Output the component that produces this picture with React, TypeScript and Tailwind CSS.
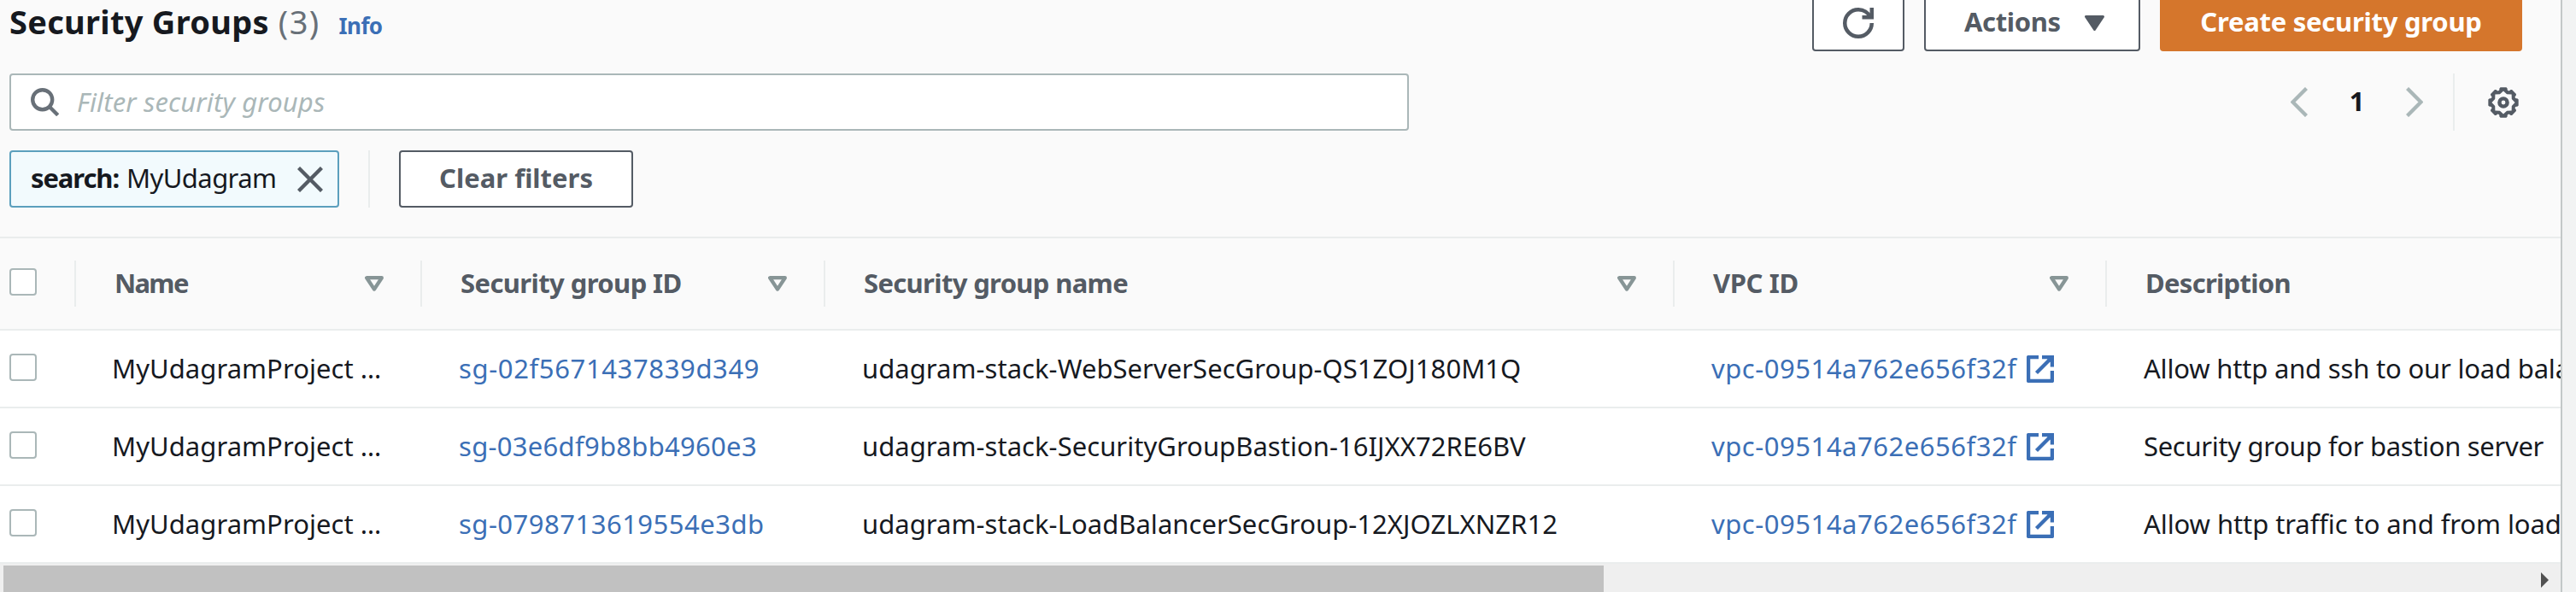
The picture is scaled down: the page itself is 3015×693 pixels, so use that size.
import React, { ReactNode } from "react";

const polar = (r: number, deg: number) => {
  const a = (deg * Math.PI) / 180;
  return `${(18 + r * Math.sin(a)).toFixed(2)} ${(18 - r * Math.cos(a)).toFixed(2)}`;
};
const steps = [0, 45, 90, 135, 180, 225, 270, 315];
const gearOuter = "M" + steps.flatMap((d) => [polar(17.3, d - 15), polar(18, d - 11), polar(18, d + 11), polar(17.3, d + 15), polar(15, d + 19), polar(15, d + 26)]).join("L") + "Z";
const gearInner = "M" + steps.flatMap((d) => [polar(13.6, d), polar(10.6, d + 22.5)]).join("L") + "Z";

function GearIcon() {
  return (
    <svg className="size-9" viewBox="0 0 36 36">
      <path d={gearOuter + gearInner} fill="#545b64" fillRule="evenodd" />
      <circle cx="18" cy="18" r="4.6" fill="none" stroke="#545b64" strokeWidth="4.4" />
    </svg>
  );
}

function SearchIcon() {
  return (
    <svg className="size-[33px]" viewBox="0 0 33 33" fill="none" stroke="#687078" strokeWidth="4.4">
      <circle cx="13.7" cy="13.7" r="11.5" />
      <path d="M21.7 21.7l10 10" />
    </svg>
  );
}

function CloseIcon() {
  return (
    <svg className="size-[30px]" viewBox="0 0 30 30" fill="none" stroke="#545b64" strokeWidth="4.4">
      <path d="M1.5 1.5l27 27M28.5 1.5l-27 27" />
    </svg>
  );
}

function RefreshIcon() {
  return (
    <svg className="size-9" viewBox="0 0 16 16" fill="none" stroke="#545b64" strokeWidth="2">
      <path d="M10 5h5V0" />
      <path d="M15 8a6.957 6.957 0 0 1-7 7 6.957 6.957 0 0 1-7-7 6.957 6.957 0 0 1 7-7 6.87 6.87 0 0 1 6.3 4" />
    </svg>
  );
}

function ExternalIcon() {
  return (
    <svg className="size-8 shrink-0" viewBox="0 0 32 32" fill="none" stroke="#3b6fb6" strokeWidth="4.3">
      <path d="M14 2.100H2.100v27.800h27.800V18" strokeLinejoin="round" />
      <path d="M18 2.100h11.900v11.400M29 3L11.500 20.500" />
      <path d="M23 3h6v6z" fill="#3b6fb6" stroke="none" />
    </svg>
  );
}

function SortIcon() {
  return (
    <svg className="h-[18px] w-[22px]" viewBox="0 0 22 18" fill="none" stroke="#879596" strokeWidth="4.3" strokeLinejoin="round">
      <path d="M2.200 2.200h17.600l-8.800 13.400z" />
    </svg>
  );
}

function Chevron({ flip = false }: { flip?: boolean }) {
  return (
    <svg className={flip ? "h-[35px] w-5 -scale-x-100" : "h-[35px] w-5"} viewBox="0 0 20 35" fill="none" stroke="#aab7b8" strokeWidth="4.4">
      <path d="M18.500 1.500l-16 16 16 16" />
    </svg>
  );
}

function Checkbox({ className = "" }: { className?: string }) {
  return <span className={`ml-[11px] block size-8 rounded-[4px] border-2 border-[#aab7b8] bg-white ${className}`} />;
}

function HeadCell({ children, sort = true }: { children: ReactNode; sort?: boolean }) {
  return (
    <div className="flex h-[106px] items-center">
      <div className={`flex h-[54px] flex-1 items-center justify-between pr-[43px] pl-[45px] font-bold whitespace-nowrap text-[#545b64] ${sort ? "border-r-2 border-[#eaeded]" : ""}`}>
        <span className="pb-0.5">{children}</span>
        {sort && <SortIcon />}
      </div>
    </div>
  );
}

const rows = [
  { id: "sg-02f5671437839d349", idTrack: "tracking-[0.63px]", name: "udagram-stack-WebServerSecGroup-QS1ZOJ180M1Q", desc: "Allow http and ssh to our load balancer", descTrack: "tracking-[-0.19px]" },
  { id: "sg-03e6df9b8bb4960e3", idTrack: "tracking-[0.29px]", name: "udagram-stack-SecurityGroupBastion-16IJXX72RE6BV", desc: "Security group for bastion server", descTrack: "tracking-[-0.32px]" },
  { id: "sg-0798713619554e3db", idTrack: "tracking-[0.49px]", name: "udagram-stack-LoadBalancerSecGroup-12XJOZLXNZR12", desc: "Allow http traffic to and from load balancer", descTrack: "tracking-[-0.08px]" },
];

const grid = "grid grid-cols-[89px_405px_472px_994px_506px_minmax(0,1fr)]";

export default function App() {
  return (
    <div className="flex h-[693px] w-[3015px] overflow-hidden bg-[#f2f3f3] font-['Noto_Sans',sans-serif] text-[31px] leading-[42px] text-[#16191f]">
      <main className="flex w-[2999px] flex-col overflow-hidden border-r-2 border-[#c3c8c8] bg-[#fafafa]">
        <header className="-mt-[7px] flex h-[67px] shrink-0 justify-between pr-[45px] pl-[11px]">
          <div className="flex items-baseline leading-[64px]">
            <h1 className="text-[38px] font-bold tracking-[0.28px]">Security Groups</h1>
            <span className="ml-[11px] text-[38px] tracking-[1.4px] text-[#687078]">(3)</span>
            <a className="ml-[22px] text-[26px] font-bold tracking-[-0.6px] text-[#3b6fb6]">Info</a>
          </div>
          <div className="flex gap-[23px] font-bold text-[#545b64]">
            <button className="flex w-[108px] items-center justify-center rounded-[4px] border-2 border-[#545b64] bg-white"><RefreshIcon /></button>
            <button className="flex w-[253px] items-center rounded-[4px] border-2 border-[#545b64] bg-white pl-[45px]">
              <span className="pb-[3px] tracking-[-0.37px]">Actions</span>
              <svg className="ml-[28px] h-[18px] w-[23px]" viewBox="0 0 23 18" fill="#545b64" stroke="#545b64" strokeWidth="3" strokeLinejoin="round">
                <path d="M1.500 1.500h20l-10 15z" />
              </svg>
            </button>
            <button className="w-[424px] rounded-[4px] bg-[#d5762c] pb-[3px] tracking-[-0.26px] text-white">Create security group</button>
          </div>
        </header>

        <div className="mt-[26px] flex h-[67px] shrink-0 items-stretch justify-between pr-[49px] pl-[11px]">
          <div className="flex w-[1638px] items-center rounded-[4px] border-2 border-[#aab7b8] bg-white pl-[23px]">
            <SearchIcon />
            <span className="ml-[21px] pb-px tracking-[0.14px] text-[#aab7b8] italic">Filter security groups</span>
          </div>
          <div className="flex items-center">
            <Chevron />
            <span className="w-[115px] pb-[3px] text-center font-bold">1</span>
            <Chevron flip />
            <span className="mr-[39px] ml-[35px] w-0.5 self-stretch bg-[#eaeded]" />
            <GearIcon />
          </div>
        </div>

        <div className="mt-[23px] flex h-[67px] shrink-0 pl-[11px]">
          <div className="flex w-[386px] items-center rounded-[4px] border-2 border-[#5b9fbd] bg-[#f2fafd] pl-[23px]">
            <b className="pb-[3px] tracking-[-1.100px]">search:</b>
            <span className="ml-[9px] flex-1 pb-[3px] tracking-[-0.59px]">MyUdagram</span>
            <span className="mr-[17px]"><CloseIcon /></span>
          </div>
          <span className="mr-[34px] ml-[34px] w-0.5 bg-[#eaeded]" />
          <button className="w-[274px] rounded-[4px] border-2 border-[#545b64] bg-white pb-[3px] font-bold text-[#545b64]">Clear filters</button>
        </div>

        <section className="mt-[34px] flex shrink-0 flex-col border-t-2 border-[#eaeded]">
          <div className={`${grid} h-[108px] border-b-2 border-[#eaeded]`}>
            <div className="flex h-[106px] items-center">
              <div className="flex h-[54px] flex-1 items-center border-r-2 border-[#eaeded] pb-1"><Checkbox /></div>
            </div>
            <HeadCell><span className="tracking-[-1.700px]">Name</span></HeadCell>
            <HeadCell><span className="tracking-[-0.6px]">Security group ID</span></HeadCell>
            <HeadCell><span className="tracking-[-0.66px]">Security group name</span></HeadCell>
            <HeadCell><span className="tracking-[-0.4px]">VPC ID</span></HeadCell>
            <HeadCell sort={false}><span className="tracking-[-0.71px]">Description</span></HeadCell>
          </div>
          {rows.map((r) => (
            <div key={r.id} className={`${grid} h-[91px] items-center border-b-2 border-[#eaeded] bg-white whitespace-nowrap`}>
              <Checkbox className="mb-[3px]" />
              <span className="pb-px pl-[42px] tracking-[0.05px]">MyUdagramProject …</span>
              <a className={`pb-px pl-[43px] text-[#3b6fb6] ${r.idTrack}`}>{r.id}</a>
              <span className="pb-px pl-[43px] tracking-[0.04px]">{r.name}</span>
              <a className="flex items-center gap-[11px] pl-[43px] text-[#3b6fb6]">
                <span className="pb-px tracking-[0.53px]">vpc-09514a762e656f32f</span>
                <ExternalIcon />
              </a>
              <span className={`overflow-hidden pb-px pl-[43px] ${r.descTrack}`}>{r.desc}</span>
            </div>
          ))}
        </section>

        <div className="flex flex-1 items-stretch bg-[#efefef] pt-0.5 pl-1">
          <div className="w-[1873px] bg-[#c1c1c1]" />
          <svg className="mt-2 mr-[14px] ml-auto h-[18px] w-[9px]" viewBox="0 0 9 18" fill="#505050"><path d="M0 0l9 9-9 9z" /></svg>
        </div>
      </main>
    </div>
  );
}
